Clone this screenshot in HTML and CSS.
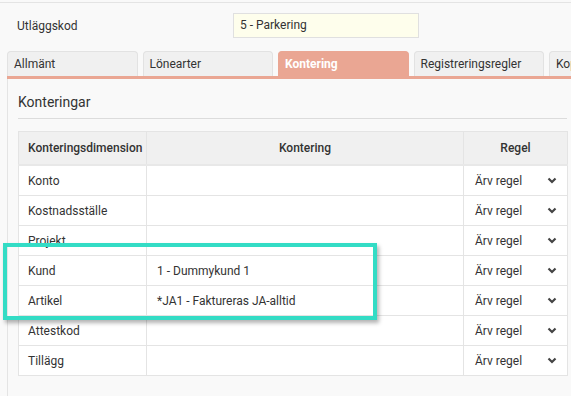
FILE: index.html
```html
<!DOCTYPE html>
<html lang="sv">
<head>
    <meta charset="UTF-8">
    <title>Utläggskod - Kontering</title>
    <link rel="stylesheet" href="styles.css">
</head>
<body>
    <div class="page">
        <div class="field-row">
            <label class="field-label">Utläggskod</label>
            <div class="field-input">5 - Parkering</div>
        </div>

        <div class="tabs">
            <div class="tab">Allmänt</div>
            <div class="tab">Lönearter</div>
            <div class="tab active">Kontering</div>
            <div class="tab">Registreringsregler</div>
            <div class="tab">Koppling</div>
        </div>
        <div class="tab-strip"></div>

        <div class="panel">
            <h3 class="panel-title">Konteringar</h3>
            <table class="grid">
                <colgroup>
                    <col class="col-dim">
                    <col class="col-kont">
                    <col class="col-regel">
                </colgroup>
                <thead>
                    <tr>
                        <th class="left">Konteringsdimension</th>
                        <th>Kontering</th>
                        <th>Regel</th>
                    </tr>
                </thead>
                <tbody id="rows"></tbody>
            </table>
        </div>

        <div class="highlight"></div>
    </div>

    <script>
        const rows = [
            ['Konto', ''],
            ['Kostnadsställe', ''],
            ['Projekt', ''],
            ['Kund', '1 - Dummykund 1'],
            ['Artikel', '*JA1 - Faktureras JA-alltid'],
            ['Attestkod', ''],
            ['Tillägg', '']
        ];
        const chevron = '<svg width="10" height="7" viewBox="0 0 10 7"><path d="M1.5 1.5 L5 5 L8.5 1.5" fill="none" stroke="#444" stroke-width="2.2"/></svg>';
        const tbody = document.getElementById('rows');
        rows.forEach(([dim, value]) => {
            const tr = document.createElement('tr');
            tr.innerHTML = `<td>${dim}</td><td class="value">${value}</td>` +
                `<td><div class="select"><span>Ärv regel</span>${chevron}</div></td>`;
            tbody.appendChild(tr);
        });
    </script>
</body>
</html>
```

FILE: styles.css
```css
body {
    margin: 0;
    background-color: #f9f9f9;
    font-family: Roboto, "Liberation Sans", sans-serif;
    font-size: 12px;
    color: #333;
    overflow: hidden;
}
.page {
    position: relative;
    height: 396px;
    padding-top: 2px;
    box-sizing: border-box;
}
.field-row {
    display: flex;
    align-items: center;
    border-top: 1px solid #e4e4e4;
    padding: 10px 0 0 17px;
    height: 25px;
}
.field-label {
    width: 216px;
}
.field-input {
    width: 178px;
    height: 23px;
    line-height: 23px;
    padding-left: 6px;
    background-color: #fefeec;
    border: 1px solid #e0e0e0;
}
.tabs {
    display: flex;
    gap: 5px;
    margin: 13px 0 0 7px;
    overflow: hidden;
}
.tab {
    flex: 0 0 130.5px;
    height: 25px;
    line-height: 25px;
    padding-left: 6px;
    box-sizing: border-box;
    background-color: #f0f0f0;
    border: 1px solid #e2e2e2;
    border-bottom: none;
    border-radius: 4px 4px 0 0;
    white-space: nowrap;
    overflow: hidden;
}
.tab.active {
    background-color: #eaa693;
    border-color: #eaa693;
    color: #fff;
    font-weight: bold;
}
.tab-strip {
    height: 3px;
    margin-left: 7px;
    background-color: #eaa693;
}
.panel {
    margin-left: 7px;
    border-left: 1px solid #e4e4e4;
    padding: 0 4px 0 10px;
    height: 320px;
}
.panel-title {
    margin: 0;
    padding: 15px 0 8px;
    font-size: 14px;
    font-weight: normal;
    border-bottom: 1px solid #dcdcdc;
}
.grid {
    margin-top: 12px;
    width: 549px;
    border-collapse: collapse;
    table-layout: fixed;
    background-color: #fff;
}
.col-dim { width: 128px; }
.col-kont { width: 317px; }
.col-regel { width: 104px; }
.grid th,
.grid td {
    border: 1px solid #e4e4e4;
    padding: 0 9px;
    white-space: nowrap;
    overflow: hidden;
}
.grid th {
    height: 32px;
    background-color: #f0f0f0;
    font-weight: 500;
    text-align: center;
    border-bottom: 2px solid #e8e8e8;
}
.grid th.left {
    text-align: left;
}
.grid td {
    height: 29px;
}
.grid td.value {
    padding-left: 10px;
}
.select {
    display: flex;
    justify-content: space-between;
    align-items: center;
    padding: 0 1px 0 2px;
}
.select svg {
    display: block;
}
.highlight {
    position: absolute;
    left: 3px;
    top: 243px;
    width: 366px;
    height: 69px;
    border: 4px solid #33dcc5;
    box-shadow: 2px 3px 4px rgba(0, 0, 0, 0.3);
    pointer-events: none;
}
```
